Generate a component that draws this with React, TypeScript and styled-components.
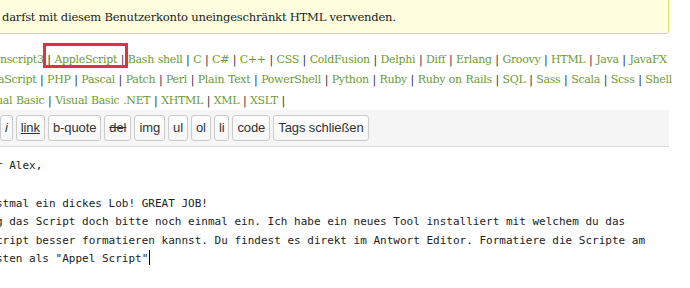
import { FC } from "react";
import styled, { createGlobalStyle } from "styled-components";

const GlobalStyle = createGlobalStyle`
  body {
    margin: 0;
    background: #ffffff;
    overflow: hidden;
  }
`;

const Wrapper = styled.div`
  width: 669px;
  display: flex;
  flex-direction: column;
`;

const Notice = styled.div`
  margin-top: -4px;
  margin-left: -10px;
  padding: 11px 12px 7px 11px;
  background: #ffffe0;
  border: 1px solid #e6db55;
  border-radius: 3px;
  font-family: "DejaVu Serif", "Liberation Serif", serif;
  font-size: 11.6px;
  letter-spacing: -0.25px;
  line-height: 18px;
  color: #222222;
  white-space: nowrap;
`;

const LangList = styled.div`
  margin-top: 16px;
  display: flex;
  flex-direction: column;
  font-family: "DejaVu Serif", "Liberation Serif", serif;
  font-size: 11px;
  letter-spacing: -0.31px;
  word-spacing: 0.5px;
  line-height: 20.3px;
`;

const LangLine = styled.div<{ $shift: number }>`
  white-space: nowrap;
  margin-left: ${(p) => p.$shift}px;
`;

const Lang = styled.span<{ $marked?: boolean }>`
  position: relative;
  color: #6d9a33;

  ${(p) =>
    p.$marked &&
    `
    &::after {
      content: "";
      position: absolute;
      top: -10px;
      bottom: -2px;
      left: -11px;
      right: -11px;
      border: 3px solid #e2333b;
    }
  `}
`;

const Sep = styled.span`
  color: #2a2a3a;
`;

const Toolbar = styled.div`
  display: flex;
  gap: 3px;
  padding: 5px 0;
  margin-top: -1px;
  background: #f5f5f5;
  border-bottom: 1px solid #dcdcdc;
`;

type BtnKind = "plain" | "italic" | "link" | "del";

const ToolButton = styled.button<{ $kind: BtnKind }>`
  height: 26px;
  padding: 0 4px;
  border: 1px solid #cccccc;
  border-radius: 3px;
  background: linear-gradient(#ffffff, #f6f6f6);
  font-family: "Liberation Sans", Arial, sans-serif;
  font-size: 13px;
  letter-spacing: -0.1px;
  color: #333333;
  font-style: ${(p) => (p.$kind === "italic" ? "italic" : "normal")};
  text-decoration: ${(p) =>
    p.$kind === "link" ? "underline" : p.$kind === "del" ? "line-through" : "none"};
`;

const Editor = styled.div`
  padding: 10.5px 0 20px 0;
  margin-left: -4px;
  font-family: "DejaVu Sans Mono", "Liberation Mono", monospace;
  font-size: 11px;
  line-height: 18.6px;
  color: #222222;
`;

const EditorLine = styled.div`
  white-space: pre;
  min-height: 18.6px;
`;

const Caret = styled.span`
  display: inline-block;
  width: 1px;
  height: 15px;
  margin-left: 1px;
  vertical-align: -3px;
  background: #000000;
`;

const languageLines: { shift: number; items: string[]; trailing?: boolean }[] = [
  {
    shift: 0,
    items: ["nscript3", "AppleScript", "Bash shell", "C", "C#", "C++", "CSS", "ColdFusion", "Delphi", "Diff", "Erlang", "Groovy", "HTML", "Java", "JavaFX"],
  },
  {
    shift: -2,
    items: ["aScript", "PHP", "Pascal", "Patch", "Perl", "Plain Text", "PowerShell", "Python", "Ruby", "Ruby on Rails", "SQL", "Sass", "Scala", "Scss", "Shell"],
  },
  {
    shift: -4,
    items: ["ual Basic", "Visual Basic .NET", "XHTML", "XML", "XSLT"],
    trailing: true,
  },
];

const buttons: { label: string; kind: BtnKind }[] = [
  { label: "i", kind: "italic" },
  { label: "link", kind: "link" },
  { label: "b-quote", kind: "plain" },
  { label: "del", kind: "del" },
  { label: "img", kind: "plain" },
  { label: "ul", kind: "plain" },
  { label: "ol", kind: "plain" },
  { label: "li", kind: "plain" },
  { label: "code", kind: "plain" },
  { label: "Tags schließen", kind: "plain" },
];

const editorLines = [
  "r Alex,",
  "",
  "stmal ein dickes Lob! GREAT JOB!",
  "g das Script doch bitte noch einmal ein. Ich habe ein neues Tool installiert mit welchem du das",
  "cript besser formatieren kannst. Du findest es direkt im Antwort Editor. Formatiere die Scripte am",
];

const App: FC = () => {
  return (
    <>
      <GlobalStyle />
      <Wrapper>
        <Notice>darfst mit diesem Benutzerkonto uneingeschränkt HTML verwenden.</Notice>
        <LangList>
          {languageLines.map((line, i) => (
            <LangLine key={i} $shift={line.shift}>
              {line.items.map((item, id) => (
                <span key={item}>
                  {id !== 0 && <Sep> | </Sep>}
                  <Lang $marked={item === "AppleScript"}>{item}</Lang>
                </span>
              ))}
              {line.trailing && <Sep> |</Sep>}
            </LangLine>
          ))}
        </LangList>
        <Toolbar>
          {buttons.map((b) => (
            <ToolButton key={b.label} $kind={b.kind}>
              {b.label}
            </ToolButton>
          ))}
        </Toolbar>
        <Editor>
          {editorLines.map((line, i) => (
            <EditorLine key={i}>{line}</EditorLine>
          ))}
          <EditorLine>
            sten als "Appel Script"
            <Caret />
          </EditorLine>
        </Editor>
      </Wrapper>
    </>
  );
};

export default App;
